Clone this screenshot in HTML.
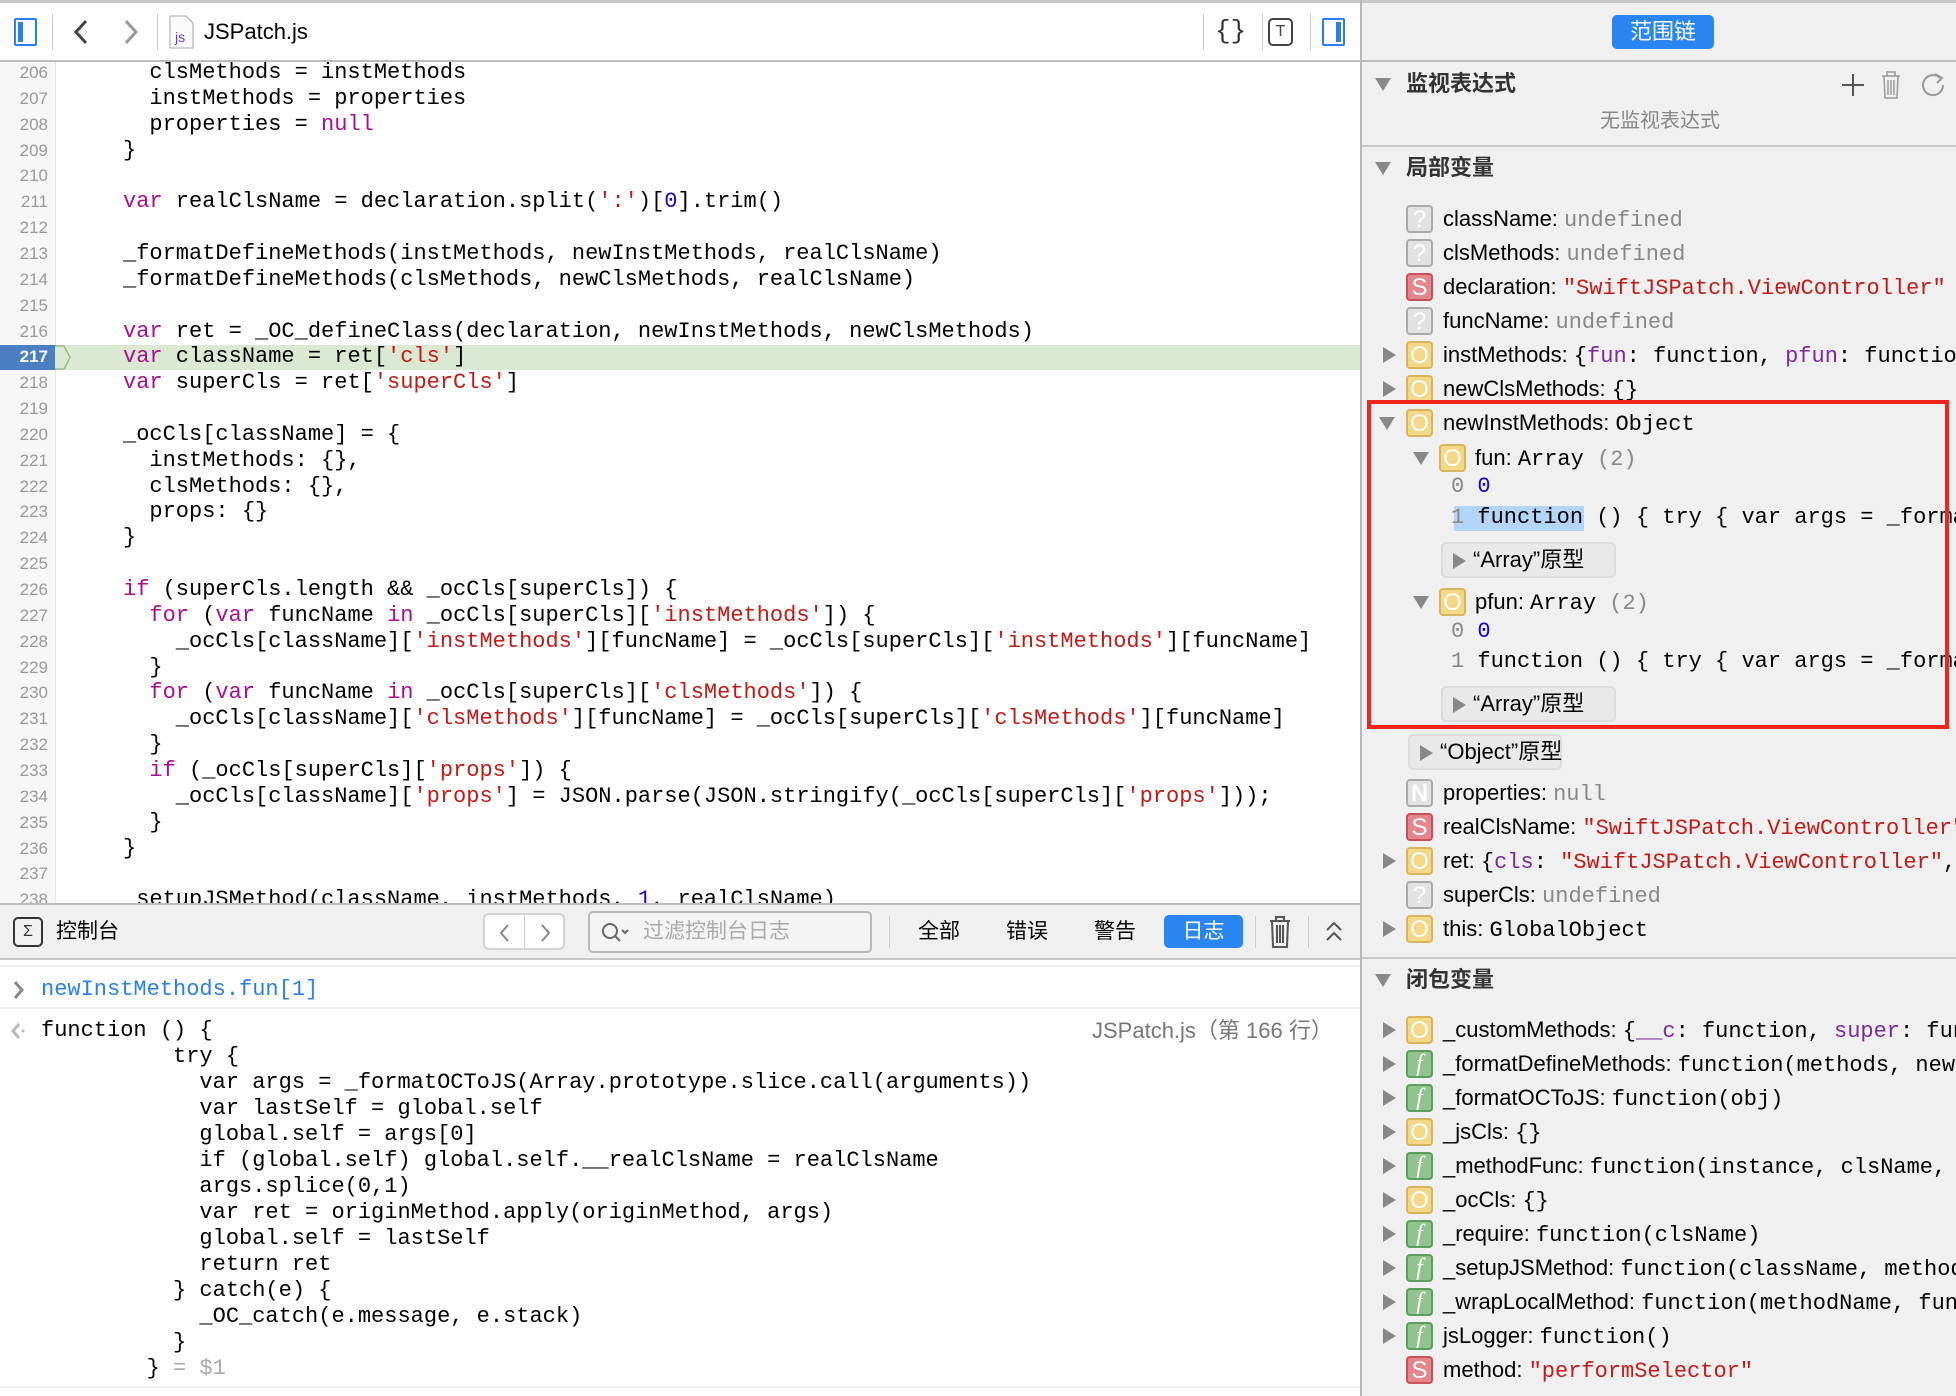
<!DOCTYPE html>
<html><head><meta charset="utf-8"><style>
*{margin:0;padding:0;box-sizing:border-box}
body{width:1956px;height:1396px;overflow:hidden;background:#fff;font-family:"Liberation Sans","Noto Sans CJK SC",sans-serif;position:relative;color:#000}
.a{position:absolute;white-space:nowrap}
.m{font-family:"Liberation Mono","Noto Sans CJK SC",monospace}
.code{position:absolute;left:0;top:0;width:1360px;height:903px;overflow:hidden}
.ln{position:absolute;left:0;width:48px;text-align:right;font-size:17px;color:#999;height:26px;line-height:26px}
.cl{position:absolute;left:123px;font-size:22px;height:26px;line-height:26px;white-space:pre;font-family:"Liberation Mono",monospace}
.k{color:#aa0d91}.s{color:#c41a16}.n{color:#1c00cf}.g{color:#888}.p{color:#7a2a9a}
.r{position:absolute;height:34px;line-height:34px;font-size:22px;white-space:nowrap}
.ic{position:absolute;width:27px;height:28px;border-radius:4px;font-size:24px;line-height:25px;text-align:center;color:#fff;font-family:"Liberation Sans",sans-serif}
.io{background:#f3d888;border:2px solid #d8b55a}
.iq{background:#e2e2e2;border:2px solid #aaa}
.is{background:#e4878c;border:2px solid #c8505a}
.iff{background:#8fc48f;border:2px solid #5c9c5c;font-style:italic;font-family:"Liberation Serif",serif}
.tri{position:absolute;width:0;height:0;border-top:8px solid transparent;border-bottom:8px solid transparent;border-left:13px solid #888}
.trd{position:absolute;width:0;height:0;border-left:8px solid transparent;border-right:8px solid transparent;border-top:13px solid #888}
.btn{position:absolute;background:#e9e9e9;border:2px solid #dcdcdc;border-radius:5px;font-size:22px;line-height:32px;padding-left:30px}
.cc{position:absolute;left:41px;font-size:22px;height:26px;line-height:26px;white-space:pre;font-family:"Liberation Mono",monospace}
</style></head><body>

<div class="a" style="left:0;top:0;width:1360px;height:3px;background:#c8c8c8"></div>
<div class="a" style="left:0;top:3px;width:1360px;height:58px;background:#fff"></div>
<div class="a" style="left:0;top:60px;width:1360px;height:2px;background:#bdbdbd"></div>
<div class="a" style="left:14px;top:18px;width:23px;height:28px;border:2px solid #2a7ff0;border-radius:2px"><div style="position:absolute;left:2px;top:2px;width:5px;height:20px;background:#2a7ff0"></div></div>
<div class="a" style="left:52px;top:14px;width:1px;height:36px;background:#ccc"></div>
<svg class="a" style="left:70px;top:18px" width="22" height="28"><path d="M16 3 L6 14 L16 25" fill="none" stroke="#444" stroke-width="3"/></svg>
<svg class="a" style="left:120px;top:18px" width="22" height="28"><path d="M6 3 L16 14 L6 25" fill="none" stroke="#999" stroke-width="3"/></svg>
<div class="a" style="left:157px;top:14px;width:1px;height:36px;background:#ccc"></div>
<svg class="a" style="left:169px;top:15px" width="26" height="34"><path d="M1 1 H17 L24 8 V33 H1 Z" fill="#fafafa" stroke="#aaa"/><text x="6" y="27" font-size="14" fill="#6a3fcf" font-family="Liberation Sans">js</text></svg>
<div class="a" style="left:204px;top:18px;font-size:22px;line-height:28px">JSPatch.js</div>
<div class="a" style="left:1203px;top:14px;width:1px;height:36px;background:#ccc"></div>
<div class="a" style="left:1215px;top:16px;font-size:26px;color:#333;font-family:'Liberation Mono',monospace">{}</div>
<div class="a" style="left:1262px;top:14px;width:1px;height:36px;background:#ccc"></div>
<div class="a" style="left:1268px;top:18px;width:25px;height:28px;border:2px solid #444;border-radius:5px;font-size:16px;line-height:24px;text-align:center;color:#444">T</div>
<div class="a" style="left:1310px;top:14px;width:1px;height:36px;background:#ccc"></div>
<div class="a" style="left:1322px;top:18px;width:23px;height:28px;border:2px solid #2a7ff0;border-radius:2px"><div style="position:absolute;right:2px;top:2px;width:5px;height:20px;background:#2a7ff0"></div></div>

<div class="code" style="top:62px;height:841px">
<div style="position:absolute;left:0;top:0;width:56px;height:841px;background:#f7f7f7;border-right:1px solid #e6e6e6"></div>
<div style="position:absolute;left:56px;top:283px;width:1304px;height:25px;background:#dbe9d2"></div>
<div style="position:absolute;left:0;top:283px;width:56px;height:25px;background:#4a80c3"></div>
<svg style="position:absolute;left:54px;top:283px" width="20" height="25"><path d="M1 1 L10 1 L16 12.5 L10 24 L1 24" fill="#dbe9d2" stroke="#9ab88a" stroke-width="1.5"/></svg>
</div>
<div class="code" id="c" style="top:60px;height:843px">
<div class="ln" style="top:0">206</div><div class="cl" style="top:0">  clsMethods = instMethods</div>
<div class="ln" style="top:25.85px">207</div><div class="cl" style="top:25.85px">  instMethods = properties</div>
<div class="ln" style="top:51.7px">208</div><div class="cl" style="top:51.7px">  properties = <span class="k">null</span></div>
<div class="ln" style="top:77.55px">209</div><div class="cl" style="top:77.55px">}</div>
<div class="ln" style="top:103.4px">210</div>
<div class="ln" style="top:129.25px">211</div><div class="cl" style="top:129.25px"><span class="k">var</span> realClsName = declaration.split(<span class="s">':'</span>)[<span class="n">0</span>].trim()</div>
<div class="ln" style="top:155.1px">212</div>
<div class="ln" style="top:180.95px">213</div><div class="cl" style="top:180.95px">_formatDefineMethods(instMethods, newInstMethods, realClsName)</div>
<div class="ln" style="top:206.8px">214</div><div class="cl" style="top:206.8px">_formatDefineMethods(clsMethods, newClsMethods, realClsName)</div>
<div class="ln" style="top:232.65px">215</div>
<div class="ln" style="top:258.5px">216</div><div class="cl" style="top:258.5px"><span class="k">var</span> ret = _OC_defineClass(declaration, newInstMethods, newClsMethods)</div>
<div class="ln" style="top:284.35px;color:#fff;font-weight:bold">217</div><div class="cl" style="top:284.35px"><span class="k">var</span> className = ret[<span class="s">'cls'</span>]</div>
<div class="ln" style="top:310.2px">218</div><div class="cl" style="top:310.2px"><span class="k">var</span> superCls = ret[<span class="s">'superCls'</span>]</div>
<div class="ln" style="top:336.05px">219</div>
<div class="ln" style="top:361.9px">220</div><div class="cl" style="top:361.9px">_ocCls[className] = {</div>
<div class="ln" style="top:387.75px">221</div><div class="cl" style="top:387.75px">  instMethods: {},</div>
<div class="ln" style="top:413.6px">222</div><div class="cl" style="top:413.6px">  clsMethods: {},</div>
<div class="ln" style="top:439.45px">223</div><div class="cl" style="top:439.45px">  props: {}</div>
<div class="ln" style="top:465.3px">224</div><div class="cl" style="top:465.3px">}</div>
<div class="ln" style="top:491.15px">225</div>
<div class="ln" style="top:517px">226</div><div class="cl" style="top:517px"><span class="k">if</span> (superCls.length &amp;&amp; _ocCls[superCls]) {</div>
<div class="ln" style="top:542.85px">227</div><div class="cl" style="top:542.85px">  <span class="k">for</span> (<span class="k">var</span> funcName <span class="k">in</span> _ocCls[superCls][<span class="s">'instMethods'</span>]) {</div>
<div class="ln" style="top:568.7px">228</div><div class="cl" style="top:568.7px">    _ocCls[className][<span class="s">'instMethods'</span>][funcName] = _ocCls[superCls][<span class="s">'instMethods'</span>][funcName]</div>
<div class="ln" style="top:594.55px">229</div><div class="cl" style="top:594.55px">  }</div>
<div class="ln" style="top:620.4px">230</div><div class="cl" style="top:620.4px">  <span class="k">for</span> (<span class="k">var</span> funcName <span class="k">in</span> _ocCls[superCls][<span class="s">'clsMethods'</span>]) {</div>
<div class="ln" style="top:646.25px">231</div><div class="cl" style="top:646.25px">    _ocCls[className][<span class="s">'clsMethods'</span>][funcName] = _ocCls[superCls][<span class="s">'clsMethods'</span>][funcName]</div>
<div class="ln" style="top:672.1px">232</div><div class="cl" style="top:672.1px">  }</div>
<div class="ln" style="top:697.95px">233</div><div class="cl" style="top:697.95px">  <span class="k">if</span> (_ocCls[superCls][<span class="s">'props'</span>]) {</div>
<div class="ln" style="top:723.8px">234</div><div class="cl" style="top:723.8px">    _ocCls[className][<span class="s">'props'</span>] = JSON.parse(JSON.stringify(_ocCls[superCls][<span class="s">'props'</span>]));</div>
<div class="ln" style="top:749.65px">235</div><div class="cl" style="top:749.65px">  }</div>
<div class="ln" style="top:775.5px">236</div><div class="cl" style="top:775.5px">}</div>
<div class="ln" style="top:801.35px">237</div>
<div class="ln" style="top:827.2px">238</div><div class="cl" style="top:827.2px">_setupJSMethod(className, instMethods, <span class="n">1</span>, realClsName)</div>
</div>

<div class="a" style="left:0;top:903px;width:1360px;height:57px;background:#f0f0f0;border-top:2px solid #bdbdbd;border-bottom:2px solid #c8c8c8"></div>
<div class="a" style="left:13px;top:917px;width:30px;height:30px;border:2px solid #333;border-radius:5px;font-size:16px;line-height:26px;text-align:center;color:#333">Σ</div>
<div class="a" style="left:56px;top:918px;font-size:21px;line-height:28px">控制台</div>
<div class="a" style="left:483px;top:913px;width:82px;height:37px;border:2px solid #d2d2d2;border-radius:6px;background:#fff"><div style="position:absolute;left:39px;top:0;width:1px;height:33px;background:#d2d2d2"></div>
<svg style="position:absolute;left:12px;top:8px" width="16" height="20"><path d="M11 2 L4 10 L11 18" fill="none" stroke="#888" stroke-width="2"/></svg>
<svg style="position:absolute;left:52px;top:8px" width="16" height="20"><path d="M5 2 L12 10 L5 18" fill="none" stroke="#888" stroke-width="2"/></svg></div>
<div class="a" style="left:588px;top:911px;width:284px;height:42px;border:2px solid #b8b8b8;border-radius:5px;background:#f4f4f4"></div>
<svg class="a" style="left:601px;top:921px" width="30" height="24"><circle cx="9" cy="10" r="7" fill="none" stroke="#666" stroke-width="2"/><path d="M14 15 L19 20 M21 9 L24 12 L27 9" fill="none" stroke="#666" stroke-width="2"/></svg>
<div class="a" style="left:643px;top:918px;font-size:21px;line-height:28px;color:#aaa">过滤控制台日志</div>
<div class="a" style="left:889px;top:916px;width:1px;height:32px;background:#ccc"></div>
<div class="a" style="left:918px;top:918px;font-size:21px;line-height:28px">全部</div>
<div class="a" style="left:1006px;top:918px;font-size:21px;line-height:28px">错误</div>
<div class="a" style="left:1094px;top:918px;font-size:21px;line-height:28px">警告</div>
<div class="a" style="left:1164px;top:915px;width:79px;height:33px;background:#2a86f2;border-radius:5px;color:#fff;font-size:21px;line-height:33px;text-align:center">日志</div>
<div class="a" style="left:1255px;top:916px;width:1px;height:32px;background:#ccc"></div>
<svg class="a" style="left:1268px;top:915px" width="24" height="34"><path d="M2 6 H22 M8 6 V2 H16 V6 M4 6 L5 32 H19 L20 6 M9 10 V28 M12 10 V28 M15 10 V28" fill="none" stroke="#555" stroke-width="2"/></svg>
<div class="a" style="left:1308px;top:916px;width:1px;height:32px;background:#ccc"></div>
<svg class="a" style="left:1324px;top:918px" width="20" height="28"><path d="M3 12 L10 5 L17 12 M3 22 L10 15 L17 22" fill="none" stroke="#555" stroke-width="2"/></svg>

<div class="a" style="left:0;top:965px;width:1360px;height:2px;background:#eee"></div>
<svg class="a" style="left:12px;top:980px" width="14" height="20"><path d="M3 2 L10 10 L3 18" fill="none" stroke="#888" stroke-width="3"/></svg>
<div class="a m" style="left:41px;top:977px;font-size:22px;line-height:26px;color:#2a80ea">newInstMethods.fun[1]</div>
<div class="a" style="left:0;top:1007px;width:1360px;height:2px;background:#eee"></div>
<svg class="a" style="left:10px;top:1022px" width="16" height="18"><path d="M9 2 L3 9 L9 16" fill="none" stroke="#bbb" stroke-width="3"/><circle cx="13" cy="9" r="1.5" fill="#bbb"/></svg>
<div class="a" style="left:1092px;top:1018px;font-size:22px;line-height:26px;color:#777">JSPatch.js（第 166 行）</div>
<div class="cc" style="top:1018px">function () {</div>
<div class="cc" style="top:1044px">          try {</div>
<div class="cc" style="top:1070px">            var args = _formatOCToJS(Array.prototype.slice.call(arguments))</div>
<div class="cc" style="top:1096px">            var lastSelf = global.self</div>
<div class="cc" style="top:1122px">            global.self = args[0]</div>
<div class="cc" style="top:1148px">            if (global.self) global.self.__realClsName = realClsName</div>
<div class="cc" style="top:1174px">            args.splice(0,1)</div>
<div class="cc" style="top:1200px">            var ret = originMethod.apply(originMethod, args)</div>
<div class="cc" style="top:1226px">            global.self = lastSelf</div>
<div class="cc" style="top:1252px">            return ret</div>
<div class="cc" style="top:1278px">          } catch(e) {</div>
<div class="cc" style="top:1304px">            _OC_catch(e.message, e.stack)</div>
<div class="cc" style="top:1330px">          }</div>
<div class="cc" style="top:1356px">        } <span style="color:#aaa">= $1</span></div>
<div class="a" style="left:0;top:1386px;width:1360px;height:2px;background:#eee"></div>

<div class="a" style="left:1360px;top:0;width:596px;height:1396px;background:#f0f0f0;border-left:2px solid #b8b8b8;overflow:hidden">
<div style="position:absolute;left:0;top:0;width:596px;height:3px;background:#c8c8c8"></div>
<div style="position:absolute;left:250px;top:15px;width:102px;height:34px;background:#2a86f2;border-radius:5px;color:#fff;font-size:22px;line-height:34px;text-align:center">范围链</div>
<div style="position:absolute;left:0;top:60px;width:596px;height:2px;background:#bdbdbd"></div>
<div class="trd" style="left:13px;top:78px"></div>
<div class="r" style="left:44px;top:67px;color:#333;font-weight:bold">监视表达式</div>
<svg style="position:absolute;left:478px;top:72px" width="26" height="26"><path d="M13 2 V24 M2 13 H24" stroke="#555" stroke-width="2"/></svg>
<svg style="position:absolute;left:518px;top:70px" width="22" height="30"><path d="M2 6 H20 M7 6 V2 H15 V6 M4 6 L5 28 H17 L18 6 M8 10 V25 M11 10 V25 M14 10 V25" fill="none" stroke="#999" stroke-width="1.5"/></svg>
<svg style="position:absolute;left:557px;top:71px" width="28" height="28"><path d="M21 7 A10 10 0 1 0 24 14" fill="none" stroke="#999" stroke-width="2"/><path d="M16 3 L23 7 L18 12" fill="none" stroke="#999" stroke-width="2"/></svg>
<div class="r" style="left:0;width:596px;text-align:center;top:104px;color:#888;font-size:20px">无监视表达式</div>
<div style="position:absolute;left:0;top:145px;width:596px;height:2px;background:#c8c8c8"></div>
<div class="trd" style="left:13px;top:162px"></div>
<div class="r" style="left:44px;top:151px;color:#333;font-weight:bold">局部变量</div>

<div class="ic iq" style="left:44px;top:205px">?</div><div class="r" style="left:81px;top:202px">className: <span class="m g">undefined</span></div>
<div class="ic iq" style="left:44px;top:239px">?</div><div class="r" style="left:81px;top:236px">clsMethods: <span class="m g">undefined</span></div>
<div class="ic is" style="left:44px;top:273px">S</div><div class="r" style="left:81px;top:270px">declaration: <span class="m s">"SwiftJSPatch.ViewController"</span></div>
<div class="ic iq" style="left:44px;top:307px">?</div><div class="r" style="left:81px;top:304px">funcName: <span class="m g">undefined</span></div>
<div class="tri" style="left:21px;top:347px"></div><div class="ic io" style="left:44px;top:341px">O</div><div class="r" style="left:81px;top:338px">instMethods: <span class="m">{<span class="p">fun</span>: function, <span class="p">pfun</span>: function}</span></div>
<div class="tri" style="left:21px;top:381px"></div><div class="ic io" style="left:44px;top:375px">O</div><div class="r" style="left:81px;top:372px">newClsMethods: <span class="m">{}</span></div>
<div class="trd" style="left:17px;top:417px"></div><div class="ic io" style="left:44px;top:409px">O</div><div class="r" style="left:81px;top:406px">newInstMethods: <span class="m">Object</span></div>
<div class="trd" style="left:51px;top:452px"></div><div class="ic io" style="left:77px;top:444px">O</div><div class="r" style="left:113px;top:441px">fun: <span class="m">Array <span class="g">(2)</span></span></div>
<div class="r m" style="left:89px;top:470px"><span class="g">0</span> <span class="n">0</span></div>
<div style="position:absolute;left:92px;top:506px;width:130px;height:25px;background:#b4d5fa"></div>
<div class="r m" style="left:89px;top:501px"><span class="g">1</span> function () { try { var args = _formatOCToJS</div>
<div class="btn" style="left:79px;top:542px;width:175px;height:36px"><div class="tri" style="left:10px;top:9px"></div>“Array”原型</div>
<div class="trd" style="left:51px;top:596px"></div><div class="ic io" style="left:77px;top:588px">O</div><div class="r" style="left:113px;top:585px">pfun: <span class="m">Array <span class="g">(2)</span></span></div>
<div class="r m" style="left:89px;top:615px"><span class="g">0</span> <span class="n">0</span></div>
<div class="r m" style="left:89px;top:645px"><span class="g">1</span> function () { try { var args = _formatOCToJS</div>
<div class="btn" style="left:79px;top:686px;width:175px;height:36px"><div class="tri" style="left:10px;top:9px"></div>“Array”原型</div>
<div style="position:absolute;left:5px;top:400px;width:582px;height:329px;border:4px solid #f0261e"></div>
<div class="btn" style="left:46px;top:734px;width:154px;height:36px"><div class="tri" style="left:10px;top:9px"></div>“Object”原型</div>
<div class="ic iq" style="left:44px;top:779px;font-weight:bold">N</div><div class="r" style="left:81px;top:776px">properties: <span class="m g">null</span></div>
<div class="ic is" style="left:44px;top:813px">S</div><div class="r" style="left:81px;top:810px">realClsName: <span class="m s">"SwiftJSPatch.ViewController"</span></div>
<div class="tri" style="left:21px;top:853px"></div><div class="ic io" style="left:44px;top:847px">O</div><div class="r" style="left:81px;top:844px">ret: <span class="m">{<span class="p">cls</span>: <span class="s">"SwiftJSPatch.ViewController"</span>, superCls</span></div>
<div class="ic iq" style="left:44px;top:881px">?</div><div class="r" style="left:81px;top:878px">superCls: <span class="m g">undefined</span></div>
<div class="tri" style="left:21px;top:921px"></div><div class="ic io" style="left:44px;top:915px">O</div><div class="r" style="left:81px;top:912px">this: <span class="m">GlobalObject</span></div>
<div style="position:absolute;left:0;top:957px;width:596px;height:2px;background:#c8c8c8"></div>
<div class="trd" style="left:13px;top:974px"></div>
<div class="r" style="left:44px;top:963px;color:#333;font-weight:bold">闭包变量</div>

<div class="tri" style="left:21px;top:1022px"></div><div class="ic io" style="left:44px;top:1016px">O</div><div class="r" style="left:81px;top:1013px">_customMethods: <span class="m">{<span class="p">__c</span>: function, <span class="p">super</span>: function}</span></div>
<div class="tri" style="left:21px;top:1056px"></div><div class="ic iff" style="left:44px;top:1050px">f</div><div class="r" style="left:81px;top:1047px">_formatDefineMethods: <span class="m">function(methods, newMethods</span></div>
<div class="tri" style="left:21px;top:1090px"></div><div class="ic iff" style="left:44px;top:1084px">f</div><div class="r" style="left:81px;top:1081px">_formatOCToJS: <span class="m">function(obj)</span></div>
<div class="tri" style="left:21px;top:1124px"></div><div class="ic io" style="left:44px;top:1118px">O</div><div class="r" style="left:81px;top:1115px">_jsCls: <span class="m">{}</span></div>
<div class="tri" style="left:21px;top:1158px"></div><div class="ic iff" style="left:44px;top:1152px">f</div><div class="r" style="left:81px;top:1149px">_methodFunc: <span class="m">function(instance, clsName, methodName</span></div>
<div class="tri" style="left:21px;top:1192px"></div><div class="ic io" style="left:44px;top:1186px">O</div><div class="r" style="left:81px;top:1183px">_ocCls: <span class="m">{}</span></div>
<div class="tri" style="left:21px;top:1226px"></div><div class="ic iff" style="left:44px;top:1220px">f</div><div class="r" style="left:81px;top:1217px">_require: <span class="m">function(clsName)</span></div>
<div class="tri" style="left:21px;top:1260px"></div><div class="ic iff" style="left:44px;top:1254px">f</div><div class="r" style="left:81px;top:1251px">_setupJSMethod: <span class="m">function(className, methods</span></div>
<div class="tri" style="left:21px;top:1294px"></div><div class="ic iff" style="left:44px;top:1288px">f</div><div class="r" style="left:81px;top:1285px">_wrapLocalMethod: <span class="m">function(methodName, func</span></div>
<div class="tri" style="left:21px;top:1328px"></div><div class="ic iff" style="left:44px;top:1322px">f</div><div class="r" style="left:81px;top:1319px">jsLogger: <span class="m">function()</span></div>
<div class="ic is" style="left:44px;top:1356px">S</div><div class="r" style="left:81px;top:1353px">method: <span class="m s">"performSelector"</span></div>
</div>
</body></html>
